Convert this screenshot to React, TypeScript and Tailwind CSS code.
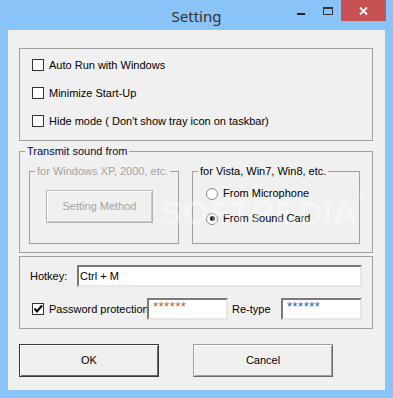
import React from "react";

function CheckBox({ checked = false }: { checked?: boolean }) {
  return (
    <span className="w-[12px] h-[12px] border border-[#333] bg-white flex items-center justify-center shrink-0">
      {checked && (
        <svg width="10" height="10" viewBox="0 0 10 10">
          <path d="M1.5 4.5 L4 7.5 L9 1.5" stroke="#000" strokeWidth="2" fill="none" />
        </svg>
      )}
    </span>
  );
}

function Radio({ checked = false }: { checked?: boolean }) {
  return (
    <span className="w-[12px] h-[12px] rounded-full border border-[#8a8a8a] bg-white flex items-center justify-center shrink-0">
      {checked && <span className="w-[5px] h-[5px] rounded-full bg-[#111]" />}
    </span>
  );
}

const sunken =
  "h-[22px] bg-white border-2 border-t-[#7a7a7a] border-l-[#7a7a7a] border-r-[#e6e6e6] border-b-[#e6e6e6] flex items-center px-[1px]";

export default function App() {
  return (
    <div className="relative w-[393px] h-[398px] bg-[#89c3f7] flex flex-col font-['Liberation_Sans',Arial,sans-serif] text-[11px] text-black">
      {/* title bar */}
      <div className="h-[30px] flex items-start">
        <div className="w-[105px]" />
        <div className="flex-1 text-center pt-[6px] leading-[20px] text-[15px] text-[#333] font-['Noto_Sans',sans-serif]">
          Setting
        </div>
        <div className="w-[105px] flex pr-[7px]">
          <div className="w-[26px] h-[21px] flex items-center justify-center">
            <span className="w-[8px] h-[2px] bg-[#222] mt-[6px]" />
          </div>
          <div className="w-[27px] h-[21px] flex items-center justify-center">
            <span className="w-[10px] h-[8px] border border-[#333] border-t-2 mt-[1px]" />
          </div>
          <div className="w-[45px] h-[21px] bg-[#c75050] flex items-center justify-center">
            <svg width="9" height="8" viewBox="0 0 9 8">
              <path d="M1 0.5 L8 7.5 M8 0.5 L1 7.5" stroke="#fff" strokeWidth="1.8" />
            </svg>
          </div>
        </div>
      </div>

      {/* client area */}
      <div className="mx-[8px] h-[360px] bg-[#f0f0f0] pt-[18px] pl-[11px] pr-[12px] flex flex-col">
        {/* options */}
        <div className="border border-[#a0a0a0] h-[93px] pl-[12px] pt-[2px] flex flex-col">
          <label className="h-[28px] flex items-center gap-[5px]">
            <CheckBox />
            <span>Auto Run with Windows</span>
          </label>
          <label className="h-[28px] flex items-center gap-[5px]">
            <CheckBox />
            <span>Minimize Start-Up</span>
          </label>
          <label className="h-[28px] flex items-center gap-[5px]">
            <CheckBox />
            <span>Hide mode ( Don't show tray icon on taskbar)</span>
          </label>
        </div>

        {/* transmit */}
        <fieldset className="border border-[#a0a0a0] mt-[4px] p-0 min-w-0">
          <legend className="ml-[5px] px-[2px] leading-[13px] text-[#0a0a3a]">Transmit sound from</legend>
          <div className="flex pl-[9px] pr-[12px] pt-[7px] pb-[8px] gap-[13px]">
            <fieldset className="border border-[#a0a0a0] w-[150px] p-0 min-w-0">
              <legend className="ml-[5px] px-[2px] leading-[13px] text-[#a3a3a3]">for Windows XP, 2000, etc.</legend>
              <div className="pl-[16px] pt-[12px] pb-[20px]">
                <button
                  disabled
                  className="w-[107px] h-[33px] bg-[#f0f0f0] border border-[#b4b4b4] shadow-[inset_1px_1px_0_#fff,inset_-1px_-1px_0_#c8c8c8] text-[#a3a3a3] text-[11px]"
                >
                  Setting Method
                </button>
              </div>
            </fieldset>
            <fieldset className="border border-[#a0a0a0] flex-1 p-0 min-w-0">
              <legend className="ml-[5px] px-[2px] leading-[13px]">for Vista, Win7, Win8, etc.</legend>
              <div className="pl-[13px] pt-[3px] flex flex-col">
                <label className="h-[25px] flex items-center gap-[5px]">
                  <Radio />
                  <span>From Microphone</span>
                </label>
                <label className="h-[25px] flex items-center gap-[5px]">
                  <Radio checked />
                  <span>From Sound Card</span>
                </label>
              </div>
            </fieldset>
          </div>
        </fieldset>

        {/* hotkey / password */}
        <div className="border border-[#a0a0a0] mt-[3px] pt-[8px] pb-[8px] flex flex-col gap-[11px]">
          <div className="flex items-center pl-[10px]">
            <span className="w-[47px]">Hotkey:</span>
            <div className={`${sunken} w-[285px]`}>Ctrl + M</div>
          </div>
          <div className="flex items-center pl-[12px]">
            <CheckBox checked />
            <span className="ml-[5px] w-[98px] overflow-hidden whitespace-nowrap">Password protection</span>
            <div className={`${sunken} w-[81px] items-start text-[#b5651d] text-[13px] leading-[13px] tracking-[0.5px] pl-[4px]`}>******</div>
            <span className="ml-[4px] w-[49px]">Re-type</span>
            <div className={`${sunken} w-[81px] items-start text-[#2a5bc4] text-[13px] leading-[13px] tracking-[0.5px] pl-[4px]`}>******</div>
          </div>
        </div>

        {/* buttons */}
        <div className="flex gap-[34px] mt-[15px]">
          <button className="w-[140px] h-[33px] bg-[#f0f0f0] border border-[#3a3a3a] shadow-[inset_1px_1px_0_#fff,inset_-1px_-1px_0_#696969]">
            OK
          </button>
          <button className="w-[140px] h-[33px] bg-[#f0f0f0] border border-[#a0a0a0] border-r-[#696969] border-b-[#696969] shadow-[inset_1px_1px_0_#fff,inset_-1px_-1px_0_#a0a0a0]">
            Cancel
          </button>
        </div>
      </div>

      {/* watermark */}
      <div className="absolute left-[160px] top-[188px] text-[33px] font-bold text-white/35 tracking-[1px] pointer-events-none font-['Liberation_Sans',sans-serif]">
        SOFTPEDIA<span className="text-[10px] align-top">®</span>
      </div>
    </div>
  );
}
